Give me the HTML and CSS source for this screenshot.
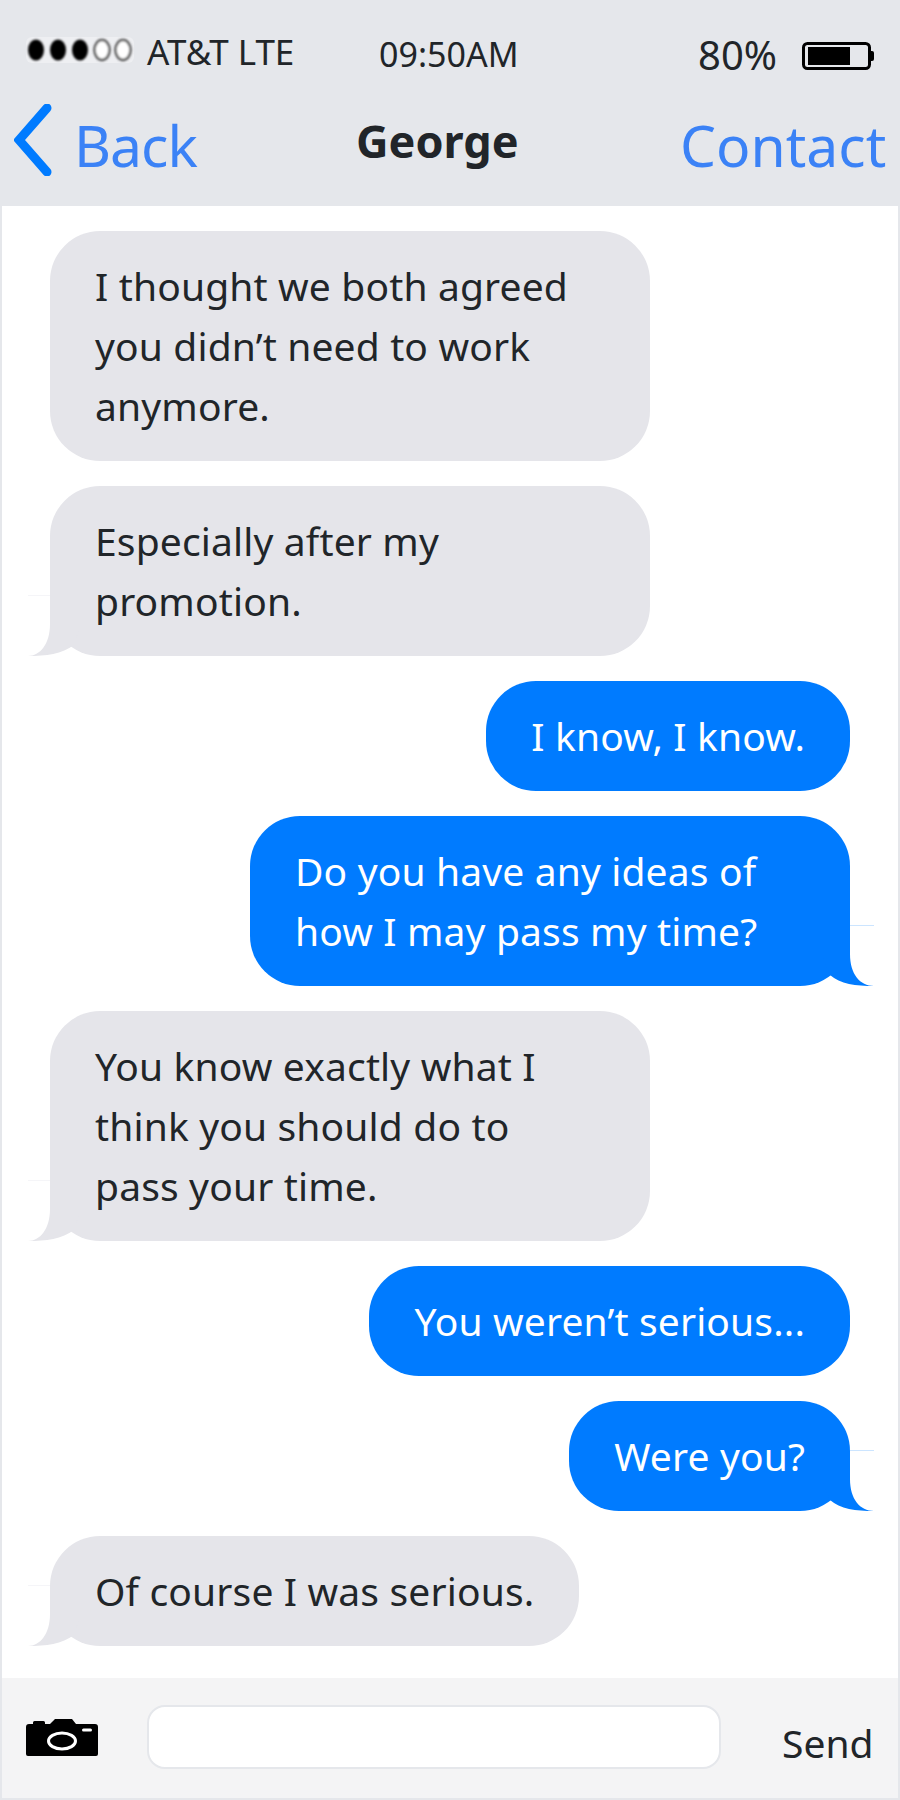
FILE: index.html
```html
<!DOCTYPE html>
<html lang="en">

<head>
    <meta charset="UTF-8">
    <meta name="viewport" content="width=device-width, initial-scale=1.0">
    <title>George</title>
    <link rel="stylesheet" href="styles.css">
</head>

<body>
    <div class="phone">
        <header class="top">
            <div class="status">
                <svg class="signal" width="108" height="26" viewBox="0 0 108 26">
                    <defs>
                        <filter id="soft" x="-30%" y="-30%" width="160%" height="160%">
                            <feGaussianBlur stdDeviation="1" />
                        </filter>
                    </defs>
                    <rect width="108" height="26" rx="6" fill="#fff" opacity="0.35" />
                    <g filter="url(#soft)">
                        <ellipse cx="10" cy="13" rx="8" ry="10.500" fill="#000" />
                        <ellipse cx="32" cy="13" rx="8" ry="10.500" fill="#000" />
                        <ellipse cx="54" cy="13" rx="8" ry="10.500" fill="#000" />
                        <ellipse cx="76" cy="13" rx="7.500" ry="10" fill="#fff" stroke="#555" stroke-width="2.500" />
                        <ellipse cx="97" cy="13" rx="7.500" ry="10" fill="#fff" stroke="#555" stroke-width="2.500" />
                    </g>
                </svg>
                <span class="carrier">AT&amp;T LTE</span>
                <span class="clock">09:50AM</span>
                <span class="percent">80%</span>
                <svg class="battery" width="72" height="28" viewBox="0 0 72 28">
                    <rect x="1.5" y="1.5" width="66" height="25" rx="4" fill="none" stroke="#000" stroke-width="3" />
                    <rect x="6" y="5" width="42" height="18" fill="#000" />
                    <path d="M69 9h1a2 2 0 0 1 2 2v6a2 2 0 0 1-2 2h-1z" fill="#000" />
                </svg>
            </div>
            <nav class="nav">
                <svg class="chevron" width="38" height="72" viewBox="0 0 38 72">
                    <path d="M33 4 L5 36 L33 68" fill="none" stroke="#007bff" stroke-width="9" stroke-linecap="round"
                        stroke-linejoin="miter" />
                </svg>
                <a class="back">Back</a>
                <span class="name">George</span>
                <a class="contact">Contact</a>
            </nav>
        </header>

        <main class="messages">
            <div class="bubble them">I thought we both agreed you didn’t need to work anymore.</div>
            <div class="bubble them tail">Especially after my promotion.</div>
            <div class="bubble me">I know, I know.</div>
            <div class="bubble me tail">Do you have any ideas of how I may pass my time?</div>
            <div class="bubble them tail">You know exactly what I think you should do to<br>pass your time.</div>
            <div class="bubble me">You weren’t serious...</div>
            <div class="bubble me tail">Were you?</div>
            <div class="bubble them tail">Of course I was serious.</div>
        </main>

        <footer class="compose">
            <svg class="camera" width="72" height="38" viewBox="0 0 72 38">
                <path fill="#000"
                    d="M3 5 h4 v-1.500 a1.500 1.500 0 0 1 1.500 -1.500 h9 a1.500 1.500 0 0 1 1.500 1.500 v1.500 h5 l2 -2 l3 -3 a1 1 0 0 1 1 -.5 h15 a1 1 0 0 1 1 .5 l4 5 h19 a3 3 0 0 1 3 3 v27 a2 2 0 0 1 -2 2 h-68 a2 2 0 0 1 -2 -2 v-27 a3 3 0 0 1 3 -3 z" />
                <ellipse cx="36" cy="22" rx="13.500" ry="8" fill="none" stroke="#fff" stroke-width="3" />
                <rect x="56" y="9.500" width="10" height="3" rx="1.500" fill="#fff" />
            </svg>
            <input class="field" type="text" aria-label="Message">
            <span class="send">Send</span>
        </footer>
    </div>
</body>

</html>
```

FILE: styles.css
```css
* {
    box-sizing: border-box;
}

body {
    margin: 0;
    font-family: "Noto Sans", "Open Sans", sans-serif;
    color: #212529;
}

.phone {
    width: 900px;
    height: 1800px;
    border: 2px solid #e5e7eb;
    display: flex;
    flex-direction: column;
    background: #fff;
}

/* header */
.top {
    height: 204px;
    background: #e5e7eb;
    flex: none;
}

.status {
    display: flex;
    align-items: center;
    height: 96px;
    padding: 8px 0 0 24px;
}

.signal {
    margin-top: -8px;
}

.carrier {
    font-size: 35px;
    margin-left: 13px;
    margin-top: -6px;
    width: 232px;
}

.clock {
    font-size: 34px;
    width: 319px;
}

.percent {
    font-size: 40px;
    width: 104px;
}

.battery {
    margin-top: 4px;
}

.nav {
    display: flex;
    align-items: center;
    height: 84px;
    padding-left: 12px;
}

.back,
.contact {
    color: #3b82f6;
    font-size: 57px;
    margin-top: 9px;
}

.back {
    margin-left: 22px;
    letter-spacing: -1px;
    width: 282px;
}

.name {
    font-size: 45px;
    font-weight: 700;
    width: 324px;
}

/* conversation */
.messages {
    flex: 1;
    display: flex;
    flex-direction: column;
    gap: 25px;
    padding: 25px 48px 0;
    overflow: hidden;
}

.bubble {
    position: relative;
    max-width: 600px;
    width: fit-content;
    padding: 25px 45px;
    border-radius: 50px;
    font-size: 39px;
    line-height: 60px;
    letter-spacing: 0.15px;
}

.them {
    background: #e5e5ea;
}

.me {
    background: #007bff;
    color: #fff;
    align-self: flex-end;
}

.tail::before {
    content: "";
    position: absolute;
    bottom: 0;
    width: 52px;
    height: 60px;
    background: inherit;
}

.them.tail::before {
    left: -22px;
    clip-path: path("M22 28 C22 48 12 60 0 60 C18 60 34 58 46 49 L52 30 L52 0 L22 0 Z");
}

.me.tail::before {
    right: -24px;
    clip-path: path("M28 28 C28 48 38 60 52 60 C34 60 18 58 8 49 L0 30 L0 0 L28 0 Z");
}

/* the hairline left over above each tail */
.tail::after {
    content: "";
    position: absolute;
    bottom: 60px;
    width: 22px;
    height: 1px;
}

.them.tail::after {
    left: -22px;
    background: #f5f5f8;
}

.me.tail::after {
    right: -24px;
    width: 24px;
    background: #cce5ff;
}

/* footer */
.compose {
    height: 120px;
    flex: none;
    background: #f4f4f5;
    display: flex;
    align-items: center;
    padding-left: 24px;
}

.camera {
    margin-top: -1px;
}

.field {
    width: 574px;
    height: 64px;
    margin-left: 49px;
    margin-top: -2px;
    background: #fff;
    border: 2px solid #e5e7eb;
    border-radius: 18px;
}

.send {
    font-size: 39px;
    margin-left: 61px;
    margin-top: 8px;
}
```
